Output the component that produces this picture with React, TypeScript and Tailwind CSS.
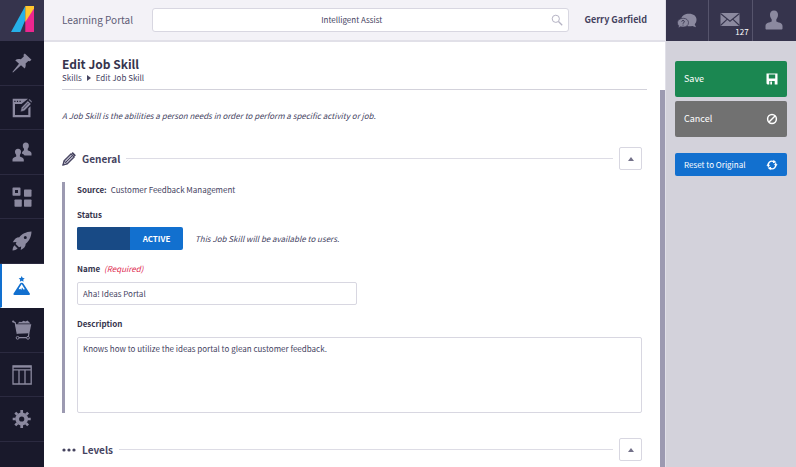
import * as React from "react";
import {useState} from "react";
import clsx from "clsx";

type IconProps = { className?: string }

function Logo() {
  return (
      <svg viewBox="0 0 23 26" className="h-[26px] w-[23px]" aria-hidden="true">
        <path d="M14.300 0 V14 L9.300 26 H0 Z" fill="#26b0e8"/>
        <path d="M14.300 14 L23 2 V26 H14.300 Z" fill="#ec268f"/>
        <path d="M14.300 0 H23 V2.500 L14.300 16 Z" fill="#ffc62f"/>
      </svg>
  )
}

function PinIcon() {
  return (
      <svg viewBox="0 0 20 20" className="size-5" fill="currentColor" aria-hidden="true">
        <path d="M12.800 0.500 L19.500 6.800 L17.800 8.300 L16.300 7.900 L13.600 10.600 C14 12.700 13.600 14.300 12.700 15.600 L9 12.300 L1 19.500 L0.400 19 L7 10.700 L3.200 7.200 C4.800 6 6.600 5.800 8.800 6.300 L11.800 3.400 L11.500 1.700 Z"/>
      </svg>
  )
}

function EditWindowIcon() {
  return (
      <svg viewBox="0 0 20 20" className="size-5" aria-hidden="true">
        <path fillRule="evenodd" d="M0.700 0.800 H16 L9.500 6 H3 V17 H16.300 V10.500 L18.500 8.300 V19.200 H0.700 Z" fill="currentColor"/>
        <path d="M2.300 3.300 H3.500 M4.900 3.300 H6.100 M7.500 3.300 H8.700" fill="none" stroke="#19192b" strokeWidth="1.200"/>
        <path d="M8.500 14 L9.300 9.500 L15.800 2.700 L19.200 5.900 L12.600 12.700 Z M16.400 2 L17.600 0.900 L20 3.300 L19.700 5 Z" fill="currentColor" stroke="#19192b" strokeWidth="0.600"/>
        <path d="M10.800 10.900 L16.400 5" stroke="#19192b" strokeWidth="0.700"/>
      </svg>
  )
}

function PeopleIcon() {
  return (
      <svg viewBox="0 0 20 20" className="size-5" fill="currentColor" aria-hidden="true">
        <path d="M13.800 0.500 C15.900 0.500 17 1.900 16.800 3.900 C16.700 5.200 16.200 6.100 15.700 6.700 V8.300 C16.700 9.200 19.500 9.300 19.500 11.500 V13.500 H12.600 C12 12.600 11 12.100 9.900 11.600 C9.900 9.400 11.300 9.100 12 8.300 V6.700 C11.500 6.100 10.900 5.200 10.800 3.900 C10.600 1.900 11.800 0.500 13.800 0.500 Z"/>
        <path d="M6 6.700 C8.100 6.700 9.200 8.200 9 10.100 C8.900 11.500 8.400 12.300 7.900 13 V14.400 C8.900 15.300 11.800 15.300 11.800 17.700 V19.500 H0.500 V17.700 C0.500 15.300 3.200 15.300 4.200 14.400 V13 C3.700 12.300 3.100 11.500 3 10.100 C2.800 8.200 4 6.700 6 6.700 Z"/>
      </svg>
  )
}

function BlocksIcon() {
  return (
      <svg viewBox="0 0 20 20" className="size-5" fill="currentColor" aria-hidden="true">
        <path fillRule="evenodd" d="M1.300 0.500 H7.700 Q8.500 0.500 8.500 1.300 V7.900 Q8.500 8.700 7.700 8.700 H1.300 Q0.500 8.700 0.500 7.900 V1.300 Q0.500 0.500 1.300 0.500 Z M3 3 V6 H6 V3 Z"/>
        <rect x="12" y="2.500" width="7.500" height="7.200" rx="0.700"/>
        <rect x="2.500" y="12.500" width="7.300" height="7.200" rx="0.700"/>
        <rect x="12" y="12.500" width="7.500" height="7.200" rx="0.700"/>
      </svg>
  )
}

function RocketIcon() {
  return (
      <svg viewBox="0 0 20 20" className="size-5" fill="currentColor" aria-hidden="true">
        <path fillRule="evenodd" d="M19.500 0.500 C13.500 0.900 10 3 7.300 6.200 C4.500 6.200 2.300 8 0.800 11.300 L4.500 10.900 L3.700 13 L7 16.300 L9.200 15.500 L8.700 19 C11.700 17.500 13.700 15.500 13.700 12.700 C17 10 19.200 6.500 19.500 0.500 Z M13.300 5.100 A1.500 1.500 0 1 1 13.300 8.100 A1.500 1.500 0 1 1 13.300 5.100 Z"/>
        <path d="M3 14.300 C1.200 15 0.800 17 0.500 19.500 C3 19.300 5 18.800 5.700 17 L4.600 16.700 L4.200 15.800 L3.400 15.500 Z"/>
      </svg>
  )
}

function MountainIcon() {
  return (
      <svg viewBox="0 0 20 20" className="size-5" fill="currentColor" aria-hidden="true">
        <path d="M9.700 0 L10.700 1.900 L12.700 2.200 L11.200 3.700 L11.600 5.700 L9.700 4.800 L7.800 5.700 L8.200 3.700 L6.700 2.200 L8.700 1.900 Z"/>
        <path fillRule="evenodd" d="M9.700 6.700 C10.500 6.700 11.100 7.100 11.500 7.800 L17.800 17.600 C18.300 18.500 17.900 19 17 19 H2.400 C1.500 19 1.100 18.500 1.600 17.600 L7.900 7.800 C8.300 7.100 8.900 6.700 9.700 6.700 Z M9.700 8 L7 12.200 L6.800 13.500 L8.300 12.700 L9.300 13.900 L10 11.500 L11.400 13.600 L12.900 13.200 Z"/>
      </svg>
  )
}

function CartIcon() {
  return (
      <svg viewBox="0 0 20 20" className="size-5" fill="currentColor" aria-hidden="true">
        <path d="M5.500 3.600 L7.500 1.700 L9.500 2 L11.500 0.800 L13.500 1.500 L15.500 0.600 L17 2 L18.500 3.600 Z"/>
        <path d="M3.300 4.300 H19.300 L17.400 13.300 L5.300 13.800 Z"/>
        <path d="M0.800 1.400 L3.200 2.600 L5.300 13.800 M16.900 13 L16.500 16 M4.500 17.700 H16.500" fill="none" stroke="currentColor" strokeWidth="1.200"/>
        <circle cx="1.100" cy="1.500" r="1"/>
        <circle cx="5.600" cy="17.800" r="1.400" fill="#19192b" stroke="currentColor"/>
        <circle cx="16" cy="17.800" r="1.400" fill="#19192b" stroke="currentColor"/>
      </svg>
  )
}

function ColumnsIcon() {
  return (
      <svg viewBox="0 0 20 20" className="size-5" fill="none" stroke="currentColor" aria-hidden="true">
        <path d="M1 1 H19.200 V19 H1 Z M1 4.800 H19 M7 5 V19 M13 5 V19" strokeWidth="1.300"/>
        <path d="M1 1.700 H19" strokeWidth="1.900"/>
      </svg>
  )
}

function GearIcon() {
  return (
      <svg viewBox="0 0 20 20" className="size-5" aria-hidden="true">
        <circle cx="9.700" cy="10" r="4.500" fill="none" stroke="currentColor" strokeWidth="3.800"/>
        <path d="M9.700 1 V4 M9.700 16 V19 M0.700 10 H3.700 M15.700 10 H18.700 M3.300 3.600 L5.400 5.700 M14 14.300 L16.100 16.400 M3.300 16.400 L5.400 14.300 M14 5.700 L16.100 3.600" stroke="currentColor" strokeWidth="2.700"/>
      </svg>
  )
}

function SearchIcon() {
  return (
      <svg viewBox="0 0 12 12" className="size-3" fill="none" stroke="currentColor" aria-hidden="true">
        <circle cx="4.800" cy="4.800" r="3.600" strokeWidth="1"/>
        <path d="M7.500 7.500 L11.200 11.200" strokeWidth="1.300"/>
      </svg>
  )
}

function ChatIcon() {
  return (
      <svg viewBox="0 0 20 16" className="h-4 w-5" aria-hidden="true">
        <path d="M12 0.700 C16.500 0.700 19.500 3 19.500 6.600 C19.500 8.700 18.900 10.200 17.700 11.300 L19 14.300 L15.300 12.900 C13.500 13.600 11 13.400 9.500 12.700 L4.300 5.700 C5 2.500 8 0.700 12 0.700 Z" fill="currentColor"/>
        <path d="M6.200 5.300 C9.300 5.300 11.500 7.100 11.500 9.700 C11.500 12.400 9.300 14.100 6.200 14.100 C5.200 14.100 4.400 14 3.700 13.700 L1 15 L1.700 12.700 C0.800 11.900 0.400 10.900 0.400 9.700 C0.400 7.100 3.100 5.300 6.200 5.300 Z" fill="currentColor" stroke="#36344d" strokeWidth="0.700"/>
        <path d="M4.600 8.500 C4.800 7.200 7.400 7.200 7.400 8.600 C7.400 9.600 6 9.600 6 10.700 M6 11.700 V12.500" fill="none" stroke="#36344d" strokeWidth="1"/>
      </svg>
  )
}

function MailIcon() {
  return (
      <svg viewBox="0 0 20 13" className="h-[13px] w-5" aria-hidden="true">
        <rect x="0.500" width="19" height="13" fill="currentColor"/>
        <path d="M0.500 0.500 L10 8.300 L19.500 0.500 M0.500 12.500 L7.300 6.200 M19.500 12.500 L12.700 6.200" fill="none" stroke="#36344d" strokeWidth="1.100"/>
      </svg>
  )
}

function UserIcon() {
  return (
      <svg viewBox="0 0 18 20" className="h-5 w-[18px]" fill="currentColor" aria-hidden="true">
        <path d="M9 0.500 C11.600 0.500 13.200 2.300 13 5 C12.900 7 12.100 8.500 11.300 9.400 V11.500 C13 12.600 17.500 12.500 17.500 16 V18.500 C17.500 19.300 17 19.500 16.500 19.500 H1.500 C1 19.500 0.500 19.300 0.500 18.500 V16 C0.500 12.500 5 12.600 6.700 11.500 V9.400 C5.900 8.500 5.100 7 5 5 C4.800 2.300 6.400 0.500 9 0.500 Z"/>
      </svg>
  )
}

function PencilIcon() {
  return (
      <svg viewBox="0 0 14 14" className="size-[14px]" aria-hidden="true">
        <path d="M1 13 L2 8.800 L9 1.800 L12.200 5 L5.200 12 Z" fill="#b5b3c4" stroke="currentColor" strokeWidth="1.200"/>
        <path d="M3.600 10.400 L10.500 3.500 M2.300 9 L5 11.800" stroke="currentColor" strokeWidth="1"/>
        <path d="M9.500 1.300 L10.800 0.100 L13.900 3.200 L12.700 4.500 Z M0.400 13.600 L1.200 11 L3.100 12.900 Z" fill="currentColor"/>
      </svg>
  )
}

function DotsIcon() {
  return (
      <svg viewBox="0 0 14 14" className="size-[14px]" fill="currentColor" aria-hidden="true">
        <circle cx="2" cy="7" r="1.600"/>
        <circle cx="7" cy="7" r="1.600"/>
        <circle cx="12" cy="7" r="1.600"/>
      </svg>
  )
}

function SaveIcon() {
  return (
      <svg viewBox="0 0 12 12" className="size-3" aria-hidden="true">
        <path fillRule="evenodd" fill="currentColor" d="M0.500 0.500 H11.500 V11.500 H1.500 L0.500 10.500 Z M2.800 1.500 V5.500 H9.200 V1.500 Z M3.300 8 V11.500 H8.700 V8 Z"/>
        <path d="M4.300 8.500 H6 V11.500 H4.300 Z" fill="currentColor"/>
      </svg>
  )
}

function CancelIcon() {
  return (
      <svg viewBox="0 0 12 12" className="size-3" fill="none" stroke="currentColor" strokeWidth="1.500" aria-hidden="true">
        <circle cx="6" cy="6" r="4.400"/>
        <path d="M3 9 L9 3"/>
      </svg>
  )
}

function ResetIcon() {
  return (
      <svg viewBox="0 0 12 12" className="size-3" fill="none" stroke="currentColor" strokeWidth="1.400" aria-hidden="true">
        <path d="M2.600 7.800 A3.800 3.800 0 0 1 7.800 2.700 M9.400 4.200 A3.800 3.800 0 0 1 4.200 9.300"/>
        <path d="M6.800 4.200 L7.500 0.800 L10.400 3.300 Z M5.200 7.800 L4.500 11.200 L1.600 8.700 Z M7.700 5.300 H11.700 L9.700 7.300 Z M0.300 6.700 H4.300 L2.300 4.700 Z" fill="currentColor" stroke="none"/>
      </svg>
  )
}

const navItems = [
  {label: "Pinned", icon: PinIcon},
  {label: "Content", icon: EditWindowIcon},
  {label: "People", icon: PeopleIcon},
  {label: "Groups", icon: BlocksIcon},
  {label: "Launch", icon: RocketIcon},
  {label: "Skills", icon: MountainIcon, active: true},
  {label: "Commerce", icon: CartIcon},
  {label: "Reports", icon: ColumnsIcon},
  {label: "Settings", icon: GearIcon},
]

function Section({title, icon: Icon, children}: { title: string, icon: React.FC<IconProps>, children?: React.ReactNode }) {
  const [open, setOpen] = useState(true)

  return (
      <section>
        <div className="flex h-[23px] items-center pr-[5px]">
          <Icon/>
          <h2 className="ml-[6px] text-[10px] leading-4 font-bold">{title}</h2>
          <div className="mx-[6px] h-px flex-1 bg-[#dddce5]"/>
          <button
              type="button"
              aria-label={`Toggle ${title}`}
              aria-expanded={open}
              onClick={() => setOpen(!open)}
              className="flex size-[23px] items-center justify-center rounded-[2px] border border-[#d8d7e1] bg-white text-[#737189]"
          >
            <svg viewBox="0 0 6 4" className={clsx("h-1 w-[6px]", !open && "rotate-180")} fill="currentColor">
              <path d="M3 0 L6 4 H0 Z"/>
            </svg>
          </button>
        </div>
        {open && children}
      </section>
  )
}

export default function App() {
  const [active, setActive] = useState(true)
  const [name, setName] = useState("Aha! Ideas Portal")
  const [description, setDescription] = useState("Knows how to utilize the ideas portal to glean customer feedback.")

  return (
      <div className="flex h-screen overflow-hidden bg-white font-['Noto_Sans_CJK_SC','Noto_Sans',sans-serif] text-[8px] leading-3 text-[#45435f]">
        <nav className="flex w-11 shrink-0 flex-col bg-[#19192b]">
          <a href="#" aria-label="Home" className="flex h-[41px] shrink-0 items-center justify-center bg-[#36344d] pb-[3px]">
            <Logo/>
          </a>
          {navItems.map(({label, icon: Icon, active}) => (
              <a
                  key={label}
                  href="#"
                  aria-label={label}
                  className={clsx(
                      "flex shrink-0 items-center justify-center border-b odd:h-11 even:h-[45px]",
                      active ? "border-b-white border-l-2 border-l-[#1270cf] bg-white pr-[2px] text-[#1270cf]" : "border-[#2b2a40] text-[#8b899f]"
                  )}
              >
                <Icon/>
              </a>
          ))}
        </nav>

        <div className="flex min-w-0 flex-1 flex-col">
          <header className="flex h-[42px] shrink-0 items-center border-b-2 border-[#e1e0e8] bg-[#f3f2f7] pr-[18px] pl-[18px]">
            <div className="w-[90px] shrink-0 text-[10px] leading-4 text-[#5f5d76]">Learning Portal</div>
            <label className="flex h-6 min-w-0 flex-1 items-center rounded-[3px] border border-[#d8d7e1] bg-white pr-[5px] text-[#b5b3c4]">
              <input
                  type="text"
                  aria-label="Search"
                  defaultValue="Intelligent Assist"
                  className="min-w-0 flex-1 text-center leading-3 text-[#45435f] outline-none"
              />
              <SearchIcon/>
            </label>
            <div className="ml-4 shrink-0 text-[9px] leading-4 font-bold">Gerry Garfield</div>
          </header>

          <div className="flex min-h-0 flex-1">
            <main className="min-w-0 flex-1 pt-[14px] pr-[13px] pl-[18px]">
              <h1 className="text-[12px] leading-4 font-bold text-[#36344d]">Edit Job Skill</h1>
              <div className="flex h-[18px] items-start border-b border-[#d3d2db]">
                <a href="#">Skills</a>
                <svg viewBox="0 0 4 6" className="mx-[5px] mt-[3px] h-[6px] w-1" fill="currentColor">
                  <path d="M0 0 L4 3 L0 6 Z"/>
                </svg>
                <a href="#">Edit Job Skill</a>
              </div>
              <p className="mt-5 mb-[25px] italic">
                A Job Skill is the abilities a person needs in order to perform a specific activity or job.
              </p>

              <Section title="General" icon={PencilIcon}>
                <div className="mt-3 mb-[25px] border-l-[3px] border-[#9c9ab1] pr-[5px] pl-3">
                  <div className="flex gap-1 pt-[2px]">
                    <span className="font-bold text-[#36344d]">Source:</span>
                    <span>Customer Feedback Management</span>
                  </div>
                  <div id="status" className="mt-[13px] font-bold text-[#36344d]">Status</div>
                  <div className="mt-[6px] flex items-center gap-3">
                    <button
                        type="button"
                        role="switch"
                        aria-labelledby="status"
                        aria-checked={active}
                        onClick={() => setActive(!active)}
                        className="grid h-[23px] w-[106px] shrink-0 grid-cols-2 items-center overflow-hidden rounded-[2px] bg-[#1270cf] font-bold text-white"
                    >
                      <span className="h-full bg-[#184a85]"/>
                      <span>{active ? "ACTIVE" : "INACTIVE"}</span>
                    </button>
                    <span className="italic">This Job Skill will be available to users.</span>
                  </div>
                  <label htmlFor="name" className="mt-[13px] flex gap-1 font-bold text-[#36344d]">
                    Name <span className="font-normal text-[#e0294f] italic">(Required)</span>
                  </label>
                  <input
                      id="name"
                      type="text"
                      value={name}
                      onChange={e => setName(e.target.value)}
                      className="mt-[7px] block h-[23px] w-full max-w-[280px] rounded-[2px] border border-[#d8d7e1] px-[5px] outline-none"
                  />
                  <label htmlFor="description" className="mt-[13px] block font-bold text-[#36344d]">Description</label>
                  <textarea
                      id="description"
                      value={description}
                      onChange={e => setDescription(e.target.value)}
                      className="mt-[7px] block h-[76px] w-full resize-none rounded-[2px] border border-[#d8d7e1] px-[5px] py-[5px] outline-none"
                  />
                </div>
              </Section>

              <Section title="Levels" icon={DotsIcon}/>
            </main>
            <div className="mt-12 w-[5px] shrink-0 bg-[#9c9ab1]"/>
          </div>
        </div>

        <aside className="flex w-[131px] shrink-0 flex-col border-l border-[#e1e0e8] bg-[#d3d2db]">
          <div className="grid h-[41px] grid-cols-3 divide-x divide-[#56546c] bg-[#36344d] text-[#8b899f]">
            <button type="button" aria-label="Help" className="flex items-center justify-center">
              <ChatIcon/>
            </button>
            <button type="button" aria-label="Messages" className="relative flex items-center justify-center pb-[2px]">
              <MailIcon/>
              <span className="absolute right-[3px] bottom-[3px] text-white">127</span>
            </button>
            <button type="button" aria-label="Profile" className="flex items-center justify-center pb-[2px]">
              <UserIcon/>
            </button>
          </div>
          <div className="flex flex-col gap-1 px-[9px] pt-5 text-[9px] text-white">
            <button type="button" className="flex h-9 items-center justify-between rounded-[2px] bg-[#1b8751] px-[9px]">
              Save <SaveIcon/>
            </button>
            <button type="button" className="flex h-9 items-center justify-between rounded-[2px] bg-[#717171] px-[9px]">
              Cancel <CancelIcon/>
            </button>
            <button type="button" className="mt-3 flex h-[23px] items-center justify-between rounded-[2px] bg-[#1270cf] px-[9px] text-[8px]">
              Reset to Original <ResetIcon/>
            </button>
          </div>
        </aside>
      </div>
  );
}
